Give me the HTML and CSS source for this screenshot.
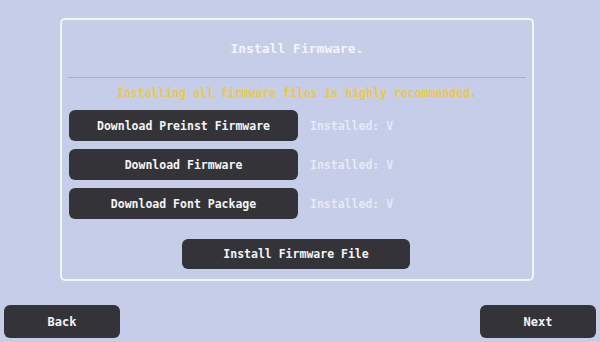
FILE: index.html
```html
<!DOCTYPE html>
<html lang="en">
<head>
  <meta charset="UTF-8">
  <title>Install Firmware</title>
  <link rel="stylesheet" href="styles.css">
</head>
<body>
  <div class="panel">
    <div class="title">Install Firmware.</div>
    <div class="divider"></div>
    <div class="notice">Installing all firmware files is highly recommended.</div>

    <div class="row">
      <button class="btn wide">Download Preinst Firmware</button>
      <span class="status">Installed: V</span>
    </div>
    <div class="row">
      <button class="btn wide">Download Firmware</button>
      <span class="status">Installed: V</span>
    </div>
    <div class="row">
      <button class="btn wide">Download Font Package</button>
      <span class="status">Installed: V</span>
    </div>

    <div class="install-row">
      <button class="btn install">Install Firmware File</button>
    </div>
  </div>

  <div class="footer">
    <button class="btn nav">Back</button>
    <button class="btn nav">Next</button>
  </div>
</body>
</html>
```

FILE: styles.css
```css
body {
  margin: 0;
  width: 600px;
  height: 342px;
  overflow: hidden;
  background-color: #c5cde9;
  font-family: 'DejaVu Sans Mono', monospace;
  font-weight: bold;
  color: #f4f5fb;
}

.panel {
  box-sizing: border-box;
  width: 474px;
  height: 263px;
  margin: 18px 0 0 60px;
  padding: 0 7px;
  border: 2px solid #f2f4fb;
  border-radius: 5px;
}

.title {
  height: 57px;
  line-height: 57px;
  text-align: center;
  font-size: 13px;
  color: #f4f5fb;
}

.divider {
  height: 1px;
  margin: 0 -1px;
  background-color: #a7aecb;
}

.notice {
  height: 30px;
  line-height: 30px;
  text-align: center;
  font-size: 11.5px;
  color: #ecc84a;
  margin-bottom: 2px;
}

.row {
  display: flex;
  align-items: center;
  gap: 12px;
  margin-bottom: 8px;
}

.btn {
  font-family: 'DejaVu Sans Mono', monospace;
  font-weight: bold;
  font-size: 11.5px;
  color: #f4f4f6;
  background-color: #343438;
  border: none;
  border-radius: 6px;
  padding: 0;
}

.wide {
  width: 229px;
  height: 31px;
}

.status {
  font-size: 11.5px;
  color: #e6e9f6;
}

.install-row {
  display: flex;
  justify-content: center;
  margin-top: 20px;
}

.install {
  width: 228px;
  height: 30px;
  margin-right: 2px;
}

.footer {
  display: flex;
  justify-content: space-between;
  padding: 0 4px;
  margin-top: 24px;
}

.nav {
  width: 116px;
  height: 33px;
  font-size: 12px;
}
```
